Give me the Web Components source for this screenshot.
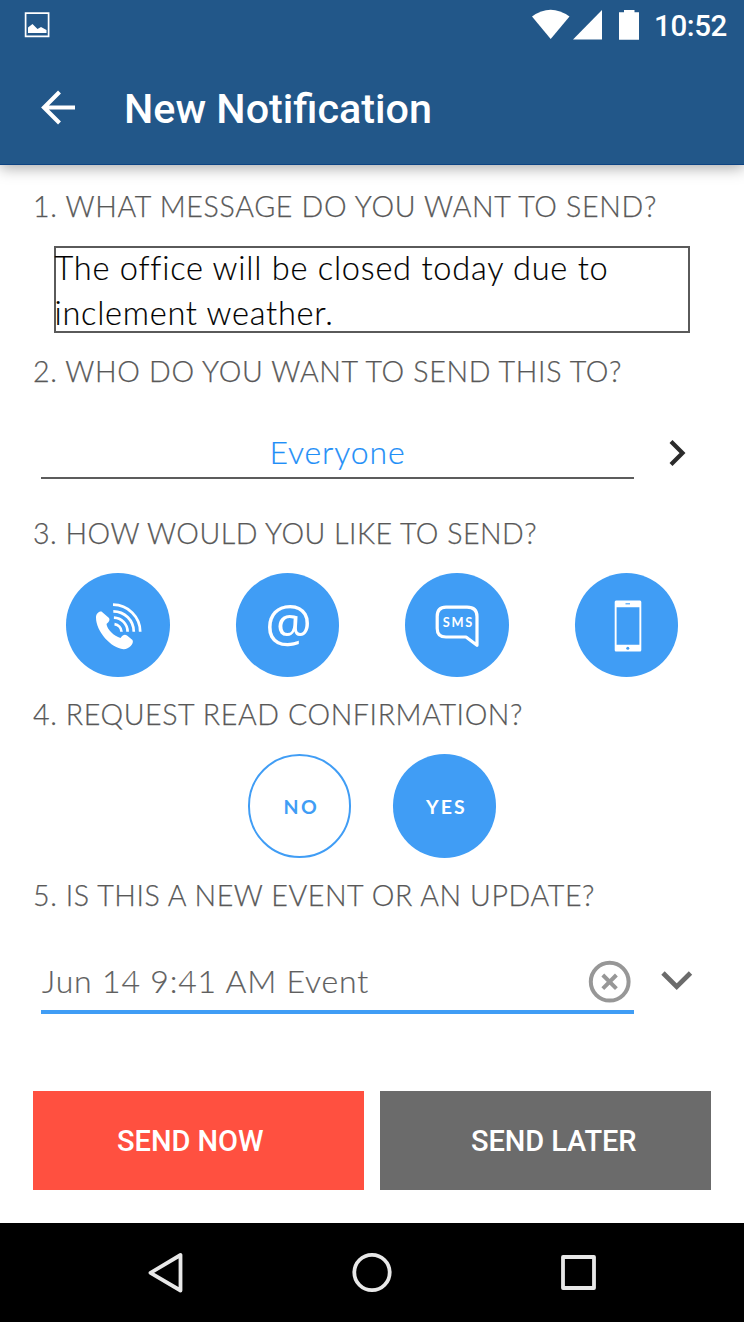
<!DOCTYPE html>
<html lang="en">
<head>
<meta charset="utf-8">
<title>New Notification</title>
<style>
html,body{margin:0;padding:0;background:#fff}
body{width:744px;height:1322px;overflow:hidden;font-family:Lato,"Open Sans",sans-serif}
</style>
</head>
<body>
<notification-screen></notification-screen>
<script>
const define = (name, html, ready) => {
  const t = document.createElement('template');
  t.innerHTML = html;
  customElements.define(name, class extends HTMLElement {
    constructor() {
      super();
      this.attachShadow({mode: 'open'}).appendChild(t.content.cloneNode(true));
    }
    connectedCallback() { if (ready) ready.call(this); }
  });
};

/* One line of text tracked out to a given advance width */
define('tracked-text', `
<style>:host{display:block;white-space:nowrap}span{display:inline-block}</style>
<span><slot></slot></span>`, function () {
  const span = this.shadowRoot.querySelector('span');
  const n = this.textContent.length;
  const target = parseFloat(this.getAttribute('advance'));
  span.style.letterSpacing = '0px';
  const natural = span.getBoundingClientRect().width;
  span.style.letterSpacing = (target - natural) / n + 'px';
});

define('status-bar', `
<style>
:host{display:flex;height:50px;box-sizing:border-box;padding:0 16px 0 24px;color:#fff;font:500 29.5px/50px Roboto,sans-serif}
svg{display:block;fill:#fff;flex:none}
.gap{flex:1}
.time{margin-left:14px;margin-right:1px;padding-top:1px}
</style>
<svg width="26" height="50" viewBox="0 0 26 50"><path d="M1.6 13.1H24.600V36.300H1.600Z" fill="none" stroke="#fff" stroke-width="1.700"/><path d="M4 33V27.500L8.500 24L13.500 29L17 27L22.500 30V33Z"/></svg>
<span class="gap"></span>
<svg width="108" height="50" viewBox="532 0 108 50">
<path d="M532 16.5Q550.500 3 569.500 16.500L550.700 39Z"/>
<path d="M573 39.500L602 10V39.500Z"/>
<path d="M619 12.300H624V10H634.500V12.300H639V39.700H619Z"/>
</svg>
<tracked-text class="time" advance="73">10:52</tracked-text>`);

define('app-bar', `
<style>
:host{display:block;height:165px;background:#225789;box-shadow:0 3px 14px rgba(0,0,0,.34);box-sizing:border-box;border-bottom:1px solid #0d4382}
.row{display:flex;height:114px;align-items:center;padding-left:40px}
svg{display:block;flex:none}
.title{margin-left:48px;padding-top:3px;color:#fff;font:500 41.300px/50px Roboto,sans-serif;white-space:nowrap}
</style>
<status-bar></status-bar>
<div class="row">
<svg width="36" height="40" viewBox="40 87 36 40"><path d="M75 107.500H44M59.500 92L44 107.500L59.500 123" fill="none" stroke="#fff" stroke-width="4.100"/></svg>
<span class="title">New Notification</span>
</div>`);

define('question-title', `
<style>:host{display:block;height:36px;padding-left:33px;font:300 28.600px/34px Lato,sans-serif;color:#585858;-webkit-text-stroke:.25px #585858}</style>
<slot></slot>`);

define('message-box', `
<style>:host{display:block;box-sizing:border-box;margin-left:53.500px;width:636.500px;height:87px;border:2px solid #5a5a5a;font:300 32.600px/45.300px Lato,sans-serif;color:#000;-webkit-text-stroke:.15px #000}
div{margin-top:-3.500px;margin-left:-1px}</style>
<div><slot></slot></div>`);

define('select-row', `
<style>
:host{display:flex;height:52px;margin-left:41px;font:300 32px/50px Lato,sans-serif}
.field{width:593px;box-sizing:border-box;border-bottom:2px solid #5c5c5c;display:flex;justify-content:center;align-items:center;color:#1f8ff7;-webkit-text-stroke:.2px currentColor}
:host([active]) .field{border-bottom:4px solid #409df5;justify-content:space-between;color:#5f5f5f}
</style>
<div class="field"><slot></slot></div><slot name="arrow"></slot>`);

define('round-button', `
<style>
:host{display:flex;box-sizing:border-box;width:103.500px;height:103.500px;border-radius:50%;background:#409df5;color:#fff;align-items:center;justify-content:center;flex:none;font:700 19.500px/24px Lato,sans-serif}
:host([outline]){background:#fff;color:#409df5;border:2.400px solid #409df5}
</style><slot></slot>`);

define('action-button', `
<style>:host{display:flex;width:330.500px;height:99px;background:#ff5040;color:#fff;align-items:center;font:500 29px/34px Roboto,sans-serif;box-sizing:border-box;padding-left:84px;padding-top:2px}
:host([muted]){background:#6b6b6b;padding-left:91px}</style><slot></slot>`);

define('system-nav', `
<style>:host{display:block;height:99px;background:#000}svg{display:block}</style>
<svg width="744" height="99" viewBox="0 1223 744 99" fill="none" stroke="#e8e8e8" stroke-width="3.800" stroke-linejoin="round">
<path d="M180.500 1255V1290.500L150.500 1272.800Z"/><circle cx="372" cy="1272.500" r="17.700"/><rect x="563" y="1257" width="31" height="31"/></svg>`);

define('notification-screen', `
<style>
:host{display:flex;flex-direction:column;height:1322px;background:#fff}
.form{flex:1;display:flex;flex-direction:column}
.circles{display:flex}
svg{display:block}
.sms{font:700 14px Lato,sans-serif;letter-spacing:1.800px}
.at{font:400 52px "Open Sans",sans-serif}
</style>
<app-bar></app-bar>
<div class="form">
<question-title style="margin-top:24px"><tracked-text advance="624">1. WHAT MESSAGE DO YOU WANT TO SEND?</tracked-text></question-title>
<message-box style="margin-top:21px"><tracked-text advance="552">The office will be closed today due to</tracked-text><tracked-text advance="279">inclement weather.</tracked-text></message-box>
<question-title style="margin-top:20.500px"><tracked-text advance="589">2. WHO DO YOU WANT TO SEND THIS TO?</tracked-text></question-title>
<select-row style="margin-top:37.500px"><tracked-text advance="136">Everyone</tracked-text>
<svg slot="arrow" width="60" height="52" viewBox="634 427 60 52"><path d="M671 441.500L682.500 453L671 464.500" fill="none" stroke="#2b2b2b" stroke-width="4.200"/></svg></select-row>
<question-title style="margin-top:37px"><tracked-text advance="504">3. HOW WOULD YOU LIKE TO SEND?</tracked-text></question-title>
<div class="circles" style="margin:21.300px 0 0 66px;gap:66px">
<round-button><svg width="103" height="103" viewBox="66 573.500 103 103" fill="none" stroke="#fff" stroke-width="2.700">
<path d="M96 617C96 613 99 610.500 101.500 611L109 617.500C110 619 109.500 621 106.500 623.500C107 629 114 635.500 120.500 637.500C123 634 125 633.500 127 635L132.500 639.500C134.500 643 128.500 649 123.500 648.700C111 647.500 96 631 96 617Z" fill="#fff" stroke="none"/>
<path d="M113 604.200A27.500 27 0 0 1 140.200 631.200M113.300 610.800A20.500 20.500 0 0 1 133.800 631.200M113.900 617.100A14.200 14.200 0 0 1 127.600 631.200M114.500 623.700A8 8 0 0 1 121.500 631.200"/></svg></round-button>
<round-button><svg width="103" height="103" viewBox="236 573.500 103 103"><text class="at" x="288.500" y="641" text-anchor="middle" textLength="47" lengthAdjust="spacingAndGlyphs" fill="#fff">@</text></svg></round-button>
<round-button><svg width="103" height="103" viewBox="405 573.500 103 103"><path d="M446 606.700H467Q477 606.700 477 616V644.800L466 636.500H446Q437.200 636.500 437.200 628V616Q437.200 606.700 446 606.700Z" fill="none" stroke="#fff" stroke-width="3.200" stroke-linejoin="round"/><text class="sms" x="442.800" y="626" fill="#fff" textLength="31" lengthAdjust="spacingAndGlyphs">SMS</text></svg></round-button>
<round-button><svg width="103" height="103" viewBox="575 573.500 103 103"><path fill-rule="evenodd" fill="#fff" d="M616 600H640Q641.300 600 641.300 601.500V649.500Q641.300 651 640 651H616Q614.700 651 614.700 649.500V601.500Q614.700 600 616 600ZM616.600 606.700V644.300H639.400V606.700Z"/><path d="M625.500 603.300H630" stroke="#409df5" stroke-width="1.100"/><circle cx="627.800" cy="647.700" r="1.500" fill="#409df5"/></svg></round-button>
</div>
<question-title style="margin-top:20.700px"><tracked-text advance="490">4. REQUEST READ CONFIRMATION?</tracked-text></question-title>
<div class="circles" style="margin:21px 0 0 247.700px;gap:41.500px">
<round-button outline><tracked-text style="margin-left:4px;padding-top:1px" advance="36">NO</tracked-text></round-button>
<round-button><tracked-text style="margin-left:4px;padding-top:1px" advance="41">YES</tracked-text></round-button>
</div>
<question-title style="margin-top:20.500px"><tracked-text advance="562">5. IS THIS A NEW EVENT OR AN UPDATE?</tracked-text></question-title>
<select-row active style="margin-top:47px;height:53px"><tracked-text style="margin-top:-10px;margin-left:1px" advance="327">Jun 14 9:41 AM Event</tracked-text>
<svg width="46" height="49" viewBox="588 960 46 49" style="overflow:visible" fill="none" stroke="#979797"><circle cx="609.700" cy="980.700" r="18.900" stroke-width="4"/><path d="M602.800 974L616.400 987.600M616.400 974L602.800 987.600" stroke-width="4"/></svg>
<svg slot="arrow" width="60" height="53" viewBox="634 961 60 53"><path d="M663 973L676.700 986.700L690.500 973" fill="none" stroke="#6b6b6b" stroke-width="4.800"/></svg></select-row>
<div class="circles" style="margin:76.500px 0 0 33px;gap:16.500px">
<action-button><tracked-text advance="146.500">SEND NOW</tracked-text></action-button>
<action-button muted><tracked-text advance="165.500">SEND LATER</tracked-text></action-button>
</div>
</div>
<system-nav></system-nav>`);
</script>
</body>
</html>
